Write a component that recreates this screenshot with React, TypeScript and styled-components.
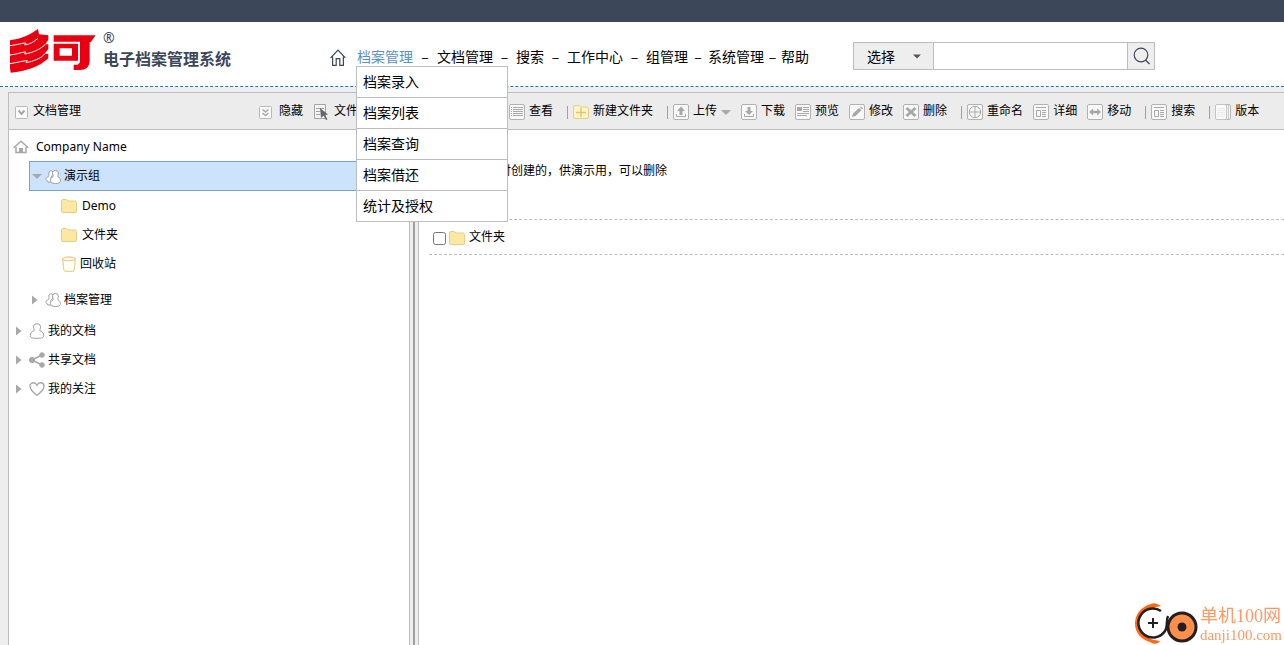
import React from "react";
import styled, { createGlobalStyle } from "styled-components";

const line = "#bbbebe";
const iconGray = "#a8a8a8";
const slate = "#3c4759";

const GlobalStyle = createGlobalStyle`
  * { box-sizing: border-box; }
  body {
    margin: 0;
    background: #eee;
    color: #000;
    font: 12px/20px "Noto Sans", "Noto Sans CJK SC", sans-serif;
  }
  ul { list-style: none; margin: 0; padding: 0; }
  button, input, select { font: inherit; color: inherit; }
`;

const Page = styled.div`
  display: flex;
  flex-direction: column;
  min-height: 100vh;
`;

const TopBar = styled.div`
  height: 22px;
  background: ${slate};
`;

const Header = styled.header`
  display: flex;
  align-items: center;
  height: 65px;
  padding: 4px 10px 0;
  background: #fff;
  border-bottom: 1px dashed #1b75b5;
`;

const Brand = styled.a`
  display: flex;
  align-items: center;
  flex: 0 0 320px;
  gap: 7px;
  padding-bottom: 10px;
  color: ${slate};
  text-decoration: none;
  svg { display: block; flex: none; }
`;

const BrandText = styled.span`
  display: flex;
  flex-direction: column;
  padding-bottom: 4px;
`;

const Registered = styled.span`
  font-size: 14px;
  line-height: 18px;
`;

const SystemName = styled.span`
  font: 700 16px/22px "Noto Sans CJK SC", sans-serif;
`;

const Nav = styled.nav`
  display: flex;
  align-items: center;
  font-family: "Noto Sans CJK SC", sans-serif;
  font-size: 14px;
  white-space: nowrap;
`;

const HomeLink = styled.a`
  display: flex;
  width: 27px;
  padding-top: 3px;
  color: ${slate};
`;

const NavList = styled.ul`
  display: flex;
`;

const NavItem = styled.li`
  position: relative;
  display: flex;
  height: 20px;
`;

const NavLink = styled.a<{ $active?: boolean }>`
  color: ${(p) => (p.$active ? "#5a8fc6" : "#000")};
  text-decoration: none;
`;

const Dash = styled.span<{ $width: number }>`
  width: ${(p) => p.$width}px;
  text-align: center;
`;

const Menu = styled.ul`
  position: absolute;
  z-index: 2;
  top: 100%;
  left: -1px;
  width: 152px;
  background: #fff;
  border: 1px solid ${line};
  border-top: 0;
`;

const MenuLink = styled.a`
  display: block;
  height: 31px;
  padding-left: 6px;
  border-top: 1px solid ${line};
  color: #000;
  line-height: 28px;
  text-decoration: none;
`;

const SearchForm = styled.form`
  display: flex;
  height: 28px;
  margin-left: 44px;
  border: 1px solid ${line};
`;

const SelectWrap = styled.label`
  position: relative;
  display: flex;
  background: #eee;
  border-right: 1px solid ${line};
  svg { position: absolute; right: 12px; top: 11px; pointer-events: none; }
`;

const Select = styled.select`
  appearance: none;
  width: 79px;
  padding: 0 13px;
  border: 0;
  background: transparent;
  font: 14px/20px "Noto Sans CJK SC", sans-serif;
`;

const SearchInput = styled.input`
  width: 193px;
  padding: 0 6px;
  border: 0;
  outline: 0;
`;

const SearchButton = styled.button`
  display: grid;
  place-items: center;
  width: 27px;
  padding: 0 0 0 2px;
  border: 0;
  border-left: 1px solid ${line};
  background: #eee;
  color: ${slate};
`;

const Workspace = styled.main`
  display: flex;
  flex: 1;
  margin: 5px 0 0 8px;
  border-top: 1px solid ${line};
  border-left: 1px solid ${line};
  background: #fff;
`;

const Sidebar = styled.aside`
  flex: 0 0 400px;
`;

const Splitter = styled.div`
  display: flex;
  justify-content: center;
  flex: 0 0 10px;
  background: #eee;
  border: solid ${line};
  border-width: 0 1px;
  &::before { content: ""; width: 2px; background: #a0a0a0; }
`;

const Content = styled.section`
  flex: 1;
  min-width: 0;
`;

const Bar = styled.div`
  display: flex;
  align-items: center;
  height: 37px;
  background: #ececec;
  border-bottom: 1px solid ${line};
  white-space: nowrap;
`;

const SideBar = styled(Bar)`
  justify-content: space-between;
  padding: 0 51px 0 6px;
`;

const ActionBar = styled(Bar)`
  padding-left: 90px;
  overflow: hidden;
`;

const SideTools = styled.div`
  display: flex;
  gap: 11px;
`;

const SideButton = styled.button<{ $gap: number }>`
  display: flex;
  align-items: center;
  gap: ${(p) => p.$gap}px;
  padding: 0;
  border: 0;
  background: none;
  svg { margin-top: 2px; }
`;

const ToolButton = styled.button`
  display: flex;
  align-items: center;
  gap: 4px;
  flex: none;
  padding: 0 10px 0 0;
  border: 0;
  background: none;
  svg { margin-top: 2px; }
`;

const Divider = styled.span`
  flex: none;
  width: 1px;
  height: 13px;
  margin: 2px 5px 0 4px;
  background: #a0a0a0;
`;

const Tree = styled.ul`
  padding-top: 2px;
`;

const Group = styled.li<{ $space: number }>`
  margin-top: ${(p) => p.$space}px;
`;

const TreeRow = styled.button<{ $indent: number; $gap?: number }>`
  display: flex;
  align-items: center;
  gap: ${(p) => p.$gap ?? 3}px;
  width: 100%;
  height: 29px;
  padding: 0 0 0 ${(p) => p.$indent}px;
  border: 0;
  background: none;
  text-align: left;
  svg { margin-top: 1px; }
`;

const SelectedRow = styled(TreeRow)`
  width: auto;
  min-width: calc(100% - 20px);
  height: 30px;
  margin-left: 20px;
  background: #cde3fc;
  border: solid #7aa2d2;
  border-width: 1px 0 1px 1px;
`;

const Note = styled.p`
  height: 90px;
  margin: 0 0 0 10px;
  padding: 31px 0 0 70px;
  border-bottom: 1px dashed ${line};
`;

const FileRow = styled.label`
  display: flex;
  align-items: center;
  height: 35px;
  margin-left: 10px;
  padding-left: 4px;
  border-bottom: 1px dashed ${line};
  input { width: 13px; height: 13px; margin: 3px 3px 0 0; }
  svg { margin: 2px 4px 0 0; }
`;

const Watermark = styled.div`
  position: fixed;
  right: 2px;
  bottom: 0;
  display: flex;
  align-items: center;
  gap: 2px;
  color: #fb9a66;
`;

const WatermarkText = styled.div`
  display: flex;
  flex-direction: column;
  font-family: "Liberation Serif", "Noto Sans CJK SC", serif;
  font-size: 15px;
  line-height: 16px;
  b { font-size: 18px; font-weight: 400; line-height: 22px; }
`;

type IconName =
  | "check" | "collapse" | "pick" | "list" | "newFolder" | "upload" | "download"
  | "preview" | "edit" | "remove" | "rename" | "detail" | "move" | "version"
  | "home" | "group" | "user" | "share" | "heart" | "folder" | "bin";

const Frame = () => <rect x="0.5" y="0.5" width="15" height="15" rx="1.5" fill="#f8f8f8" stroke="#b2b2b2" />;

const glyphs: Record<IconName, React.ReactNode> = {
  check: (
    <>
      <rect x="0.5" y="0.5" width="12" height="12" rx="1" fill="#fafafa" stroke="#b8b8b8" />
      <path d="M3.5 4.5L6.5 8L9.5 4.5" fill="none" stroke={iconGray} strokeWidth="2" />
    </>
  ),
  collapse: (
    <>
      <rect x="0.5" y="0.5" width="12" height="12" rx="1" fill="#fafafa" stroke="#b8b8b8" />
      <path d="M3.5 3.5L6.5 6L9.5 3.5M3.5 7L6.5 9.5L9.5 7" fill="none" stroke={iconGray} strokeWidth="1.5" />
    </>
  ),
  pick: (
    <>
      <path d="M0.5 0.5H11.5V14.5H0.5ZM2 4.5H10M2 7.5H6M2 10.5H6" fill="#f4f4f4" stroke="#a4a4a4" />
      <path d="M6 4L14 10.5L11 11L13.5 15.5L12 16L9.5 11.8L7 14Z" fill="#666" />
    </>
  ),
  list: (
    <>
      <Frame />
      <path d="M2 3.5H3M4 3.5H14M2 5.5H3M4 5.5H14M2 7.5H3M4 7.5H14M2 9.5H3M4 9.5H14M2 11.5H3M4 11.5H14" stroke={iconGray} />
    </>
  ),
  newFolder: (
    <>
      <path d="M0.5 3Q0.5 1.5 2 1.5H6L7.5 3H14Q15.5 3 15.5 4.5V13Q15.5 14.5 14 14.5H2Q0.5 14.5 0.5 13Z" fill="#fbf4c4" stroke="#e6cc84" />
      <path d="M3 8.5H13M8 4V13" stroke="#e2c476" strokeWidth="1.4" />
    </>
  ),
  upload: (
    <>
      <Frame />
      <path d="M8 2.5L12 7H9.5V11H6.5V7H4Z" fill={iconGray} />
      <path d="M3.5 10V12.5H12.5V10" fill="none" stroke={iconGray} />
    </>
  ),
  download: (
    <>
      <Frame />
      <path d="M8 11L4 7H6.5V3H9.5V7H12Z" fill={iconGray} />
      <path d="M3.5 10V12.5H12.5V10" fill="none" stroke={iconGray} />
    </>
  ),
  preview: (
    <>
      <Frame />
      <path d="M2 3H7V7H2Z" fill={iconGray} />
      <path d="M8 3.5H14M8 5.5H14M8 7.5H14M2 9.5H14M2 11.5H12" stroke={iconGray} />
    </>
  ),
  edit: (
    <>
      <Frame />
      <path d="M3 13L4 9.5L10 4L12.5 6L6.5 12Z M10.8 3.3L12 2.5L14 4.2L13.2 5.3Z" fill={iconGray} />
    </>
  ),
  remove: (
    <>
      <Frame />
      <path d="M3.5 4L12.5 12M12.5 4L3.5 12" stroke={iconGray} strokeWidth="3" />
    </>
  ),
  rename: (
    <>
      <Frame />
      <circle cx="8" cy="8" r="5.7" fill="none" stroke={iconGray} />
      <path d="M2.5 8H13.5M8 2.5V13.5" stroke={iconGray} />
    </>
  ),
  detail: (
    <>
      <Frame />
      <path d="M3 3.5H13M3.5 6.5H7.5V12.5H3.5ZM9 6.5H13M9 8.5H13M9 10.5H13M9 12.5H13" fill="none" stroke={iconGray} />
    </>
  ),
  move: (
    <>
      <Frame />
      <path d="M2 8L6 4.5V6.8H10V4.5L14 8L10 11.5V9.2H6V11.5Z" fill={iconGray} />
    </>
  ),
  version: (
    <>
      <rect x="2.5" y="0.5" width="13" height="15" rx="1.5" fill="#f8f8f8" stroke="#b8b8b8" />
      <rect x="0.5" y="0.5" width="11" height="15" rx="1.5" fill="#fafafa" stroke="#c4c4c4" />
      <path d="M13.5 1V15" stroke="#c4c4c4" />
      <path d="M2 4.5H10M2 6.5H10M2 8.5H10M2 10.5H10M2 12.5H10" stroke="#ebebeb" />
    </>
  ),
  home: (
    <>
      <path d="M0.8 8.8L8 2.2L15.2 8.8M3 8V13.5H13V8" fill="none" stroke={iconGray} strokeWidth="1.5" />
      <path d="M6 9H10V14H6Z" fill={iconGray} />
    </>
  ),
  group: (
    <g fill="#fff" stroke="#9c9c9c">
      <path d="M4 3C5 1.2 8 1.5 8 4C8 6 7 7 6 8V13H3L1 10.5C0.5 9 2 8 3.5 7.5C4.5 6.5 3.5 5 4 3Z" />
      <path d="M10.5 1.5C12.8 1.5 13.8 3.3 13.3 5C13 6.3 12.3 7 13 7.8C14.5 8.6 15.5 9.8 15.5 11.5C15.5 13.5 14 14.5 10.5 14.5C7 14.5 5.5 13.5 5.5 11.5C5.5 9.8 6.5 8.6 8 7.8C8.7 7 8 6.3 7.7 5C7.2 3.3 8.2 1.5 10.5 1.5Z" />
    </g>
  ),
  user: (
    <path d="M8 0.8C10.8 0.8 12 2.8 11.5 4.8C11.2 6.2 10.4 6.9 11 7.8C13.3 8.7 14.7 10.2 14.7 12.3C14.7 14.7 13.5 15.3 8 15.3C2.5 15.3 1.3 14.7 1.3 12.3C1.3 10.2 2.7 8.7 5 7.8C5.6 6.9 4.8 6.2 4.5 4.8C4 2.8 5.2 0.8 8 0.8Z" fill="#fff" stroke="#9c9c9c" />
  ),
  share: (
    <g fill={iconGray} stroke={iconGray}>
      <path d="M13 3L3 8L13 13" fill="none" strokeWidth="1.8" />
      <circle cx="3" cy="8" r="2.6" />
      <circle cx="13" cy="3" r="2.3" />
      <circle cx="13" cy="13" r="2.3" />
    </g>
  ),
  heart: (
    <path d="M8 14.2C5 12 1 9 1 5.2C1 2.6 3 1.8 4.6 1.8C6.4 1.8 7.4 3 8 4.2C8.6 3 9.6 1.8 11.4 1.8C13 1.8 15 2.6 15 5.2C15 9 11 12 8 14.2Z" fill="none" stroke={iconGray} strokeWidth="1.4" />
  ),
  folder: (
    <path d="M0.5 3Q0.5 1.5 2 1.5H5.5L7 3H14Q15.5 3 15.5 4.5V13Q15.5 14.5 14 14.5H2Q0.5 14.5 0.5 13Z" fill="#fbe8a2" stroke="#e6cd86" />
  ),
  bin: (
    <g fill="none" stroke="#ecd08c" strokeWidth="1.3">
      <ellipse cx="8" cy="2.8" rx="6.3" ry="1.8" />
      <path d="M1.7 3L2.7 13.5Q3 15.3 5 15.3H11Q13 15.3 13.3 13.5L14.3 3" />
    </g>
  ),
};

const Icon = ({ name, size = 16 }: { name: IconName; size?: number }) => (
  <svg width={size} height={size} viewBox={`0 0 ${size} ${size}`} aria-hidden="true">
    {glyphs[name]}
  </svg>
);

const DownArrow = ({ color = iconGray, width = 10 }: { color?: string; width?: number }) => (
  <svg width={width} height="5" viewBox="0 0 10 5" aria-hidden="true">
    <path d="M0 0H10L5 5Z" fill={color} />
  </svg>
);

const RightArrow = () => (
  <svg width="10" height="10" viewBox="0 0 10 10" aria-hidden="true">
    <path d="M0 0.5L5.5 5L0 9.5Z" fill={iconGray} />
  </svg>
);

const Logo = () => (
  <svg width="86" height="44" viewBox="0 0 258 132" role="img" aria-label="多可">
    <g fill="#e60012">
      <path d="M0 34C35 29 60 17 84 0L87 16L115 19V32L106 46H115V60L104 74H115V88C90 112 50 127 2 131L0 118Z" />
      <path d="M131 19H257L242 40H239V98Q237 122 210 123H191V107H203Q210 105 210 96V38H131Z" />
      <path fillRule="evenodd" d="M131 44H204V95H131ZM149 58V80H186V58Z" />
    </g>
    <g fill="none" stroke="#fff" strokeWidth="3">
      <path d="M0 50C25 47 36 42 48 42L44 48C60 46 72 38 84 28" />
      <path d="M0 78C25 75 35 69 48 69L44 75C65 72 90 62 106 46" />
      <path d="M0 104C25 100 40 95 52 95L48 101C70 97 94 88 106 73" />
    </g>
  </svg>
);

const menuItems = ["档案录入", "档案列表", "档案查询", "档案借还", "统计及授权"];

const navItems: { label: string; gap?: number }[] = [
  { label: "档案管理", gap: 24 },
  { label: "文档管理", gap: 23 },
  { label: "搜索", gap: 23 },
  { label: "工作中心", gap: 23 },
  { label: "组管理", gap: 20 },
  { label: "系统管理", gap: 17 },
  { label: "帮助" },
];

const tools: { icon: IconName; label: string; divided?: boolean; menu?: boolean }[] = [
  { icon: "list", label: "查看" },
  { icon: "newFolder", label: "新建文件夹", divided: true },
  { icon: "upload", label: "上传", divided: true, menu: true },
  { icon: "download", label: "下载" },
  { icon: "preview", label: "预览" },
  { icon: "edit", label: "修改" },
  { icon: "remove", label: "删除" },
  { icon: "rename", label: "重命名", divided: true },
  { icon: "detail", label: "详细" },
  { icon: "move", label: "移动" },
  { icon: "detail", label: "搜索", divided: true },
  { icon: "version", label: "版本", divided: true },
];

const roots: { icon: IconName; label: string }[] = [
  { icon: "user", label: "我的文档" },
  { icon: "share", label: "共享文档" },
  { icon: "heart", label: "我的关注" },
];

export default function App() {
  return (
    <Page>
      <GlobalStyle />
      <TopBar />
      <Header>
        <Brand href="#">
          <Logo />
          <BrandText>
            <Registered>®</Registered>
            <SystemName>电子档案管理系统</SystemName>
          </BrandText>
        </Brand>
        <Nav>
          <HomeLink href="#" aria-label="首页">
            <svg width="16" height="18" viewBox="0 0 16 18" fill="none" stroke="currentColor" strokeWidth="1.2">
              <path d="M0.6 8.8L8 1.2L15.4 8.8M2.6 7.5V16.4H6.2V9.6H9.8V16.4H13.4V7.5" />
            </svg>
          </HomeLink>
          <NavList>
            {navItems.map((item, i) => (
              <NavItem key={item.label}>
                <NavLink href="#" $active={i === 0}>{item.label}</NavLink>
                {item.gap && <Dash $width={item.gap}>–</Dash>}
                {i === 0 && (
                  <Menu>
                    {menuItems.map((label) => (
                      <li key={label}><MenuLink href="#">{label}</MenuLink></li>
                    ))}
                  </Menu>
                )}
              </NavItem>
            ))}
          </NavList>
        </Nav>
        <SearchForm onSubmit={(e) => e.preventDefault()}>
          <SelectWrap>
            <Select aria-label="搜索范围"><option>选择</option></Select>
            <DownArrow color="#555" width={8} />
          </SelectWrap>
          <SearchInput type="text" aria-label="搜索" />
          <SearchButton type="submit" aria-label="搜索">
            <svg width="18" height="18" viewBox="0 0 18 18" fill="none" stroke="currentColor" strokeWidth="1.2">
              <circle cx="8" cy="8" r="6.8" />
              <path d="M12.5 13L16.5 17" />
            </svg>
          </SearchButton>
        </SearchForm>
      </Header>

      <Workspace>
        <Sidebar>
          <SideBar>
            <SideButton $gap={5}><Icon name="check" size={13} />文档管理</SideButton>
            <SideTools>
              <SideButton $gap={7}><Icon name="collapse" size={13} />隐藏</SideButton>
              <SideButton $gap={4}><Icon name="pick" />文件</SideButton>
            </SideTools>
          </SideBar>
          <Tree>
            <li>
              <TreeRow $indent={4} $gap={7}><Icon name="home" />Company Name</TreeRow>
              <ul>
                <li>
                  <SelectedRow $indent={2}><DownArrow /><Icon name="group" />演示组</SelectedRow>
                  <ul>
                    <li><TreeRow $indent={52} $gap={5}><Icon name="folder" />Demo</TreeRow></li>
                    <li><TreeRow $indent={52} $gap={5}><Icon name="folder" />文件夹</TreeRow></li>
                    <li><TreeRow $indent={52}><Icon name="bin" />回收站</TreeRow></li>
                  </ul>
                </li>
                <Group $space={7}>
                  <TreeRow $indent={23}><RightArrow /><Icon name="group" />档案管理</TreeRow>
                </Group>
              </ul>
            </li>
            <Group $space={2}>
              {roots.map((r) => (
                <TreeRow key={r.label} $indent={7}><RightArrow /><Icon name={r.icon} />{r.label}</TreeRow>
              ))}
            </Group>
          </Tree>
        </Sidebar>
        <Splitter />
        <Content>
          <ActionBar>
            {tools.map((t) => (
              <React.Fragment key={t.label}>
                {t.divided && <Divider />}
                <ToolButton>
                  <Icon name={t.icon} />
                  {t.label}
                  {t.menu && <DownArrow />}
                </ToolButton>
              </React.Fragment>
            ))}
          </ActionBar>
          <Note>时创建的，供演示用，可以删除</Note>
          <FileRow>
            <input type="checkbox" />
            <Icon name="folder" />
            文件夹
          </FileRow>
        </Content>
      </Workspace>

      <Watermark>
        <svg width="64" height="42" viewBox="0 0 64 42" aria-hidden="true">
          <path d="M27 3C24 1 20 -1 17 1C6 4 1 12 1 21C1 30 8 37 16 39C20 42 24 41 26 38C14 37 6 30 6 21C6 11 15 5 27 3Z" fill="#ff6a13" />
          <circle cx="19" cy="20" r="14.5" fill="#fff" />
          <path d="M27 8A14.5 14.5 0 1 0 31 28C34 24 32 17 34 13" fill="none" stroke="#231f20" strokeWidth="2.5" />
          <path d="M19 15V25M14 20H24" stroke="#231f20" strokeWidth="2" />
          <circle cx="48" cy="24" r="14" fill="#ff8f4a" stroke="#231f20" strokeWidth="3" />
          <circle cx="48" cy="24" r="4.5" fill="#231f20" />
        </svg>
        <WatermarkText><b>单机100网</b><span>danji100.com</span></WatermarkText>
      </Watermark>
    </Page>
  );
}
